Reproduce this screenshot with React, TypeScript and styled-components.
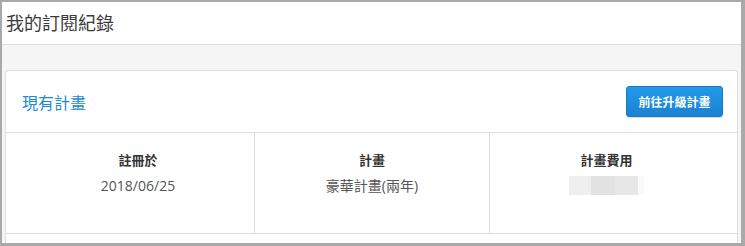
import * as React from 'react';
import styled, { createGlobalStyle } from 'styled-components';

const GlobalStyle = createGlobalStyle`
  html, body {
    margin: 0;
    padding: 0;
    background: #fff;
  }
  * {
    box-sizing: border-box;
  }
`;

type Field = {
  label: string,
  value?: string,
  hidden?: boolean,
}

const fields: Field[] = [
  { label: '註冊於', value: '2018/06/25' },
  { label: '計畫', value: '豪華計畫(兩年)' },
  { label: '計畫費用', hidden: true },
];

const App: React.FC = () => {
  return (
    <React.Fragment>
      <GlobalStyle />
      <Frame>
        <PageHeader>
          <PageTitle>我的訂閱紀錄</PageTitle>
        </PageHeader>
        <PageBody>
          <Card>
            <CardHeader>
              <CardTitle>現有計畫</CardTitle>
              <UpgradeButton>前往升級計畫</UpgradeButton>
            </CardHeader>
            <InfoRow>
              {fields.map((f) => (
                <InfoCell key={f.label}>
                  <InfoLabel>{f.label}</InfoLabel>
                  {f.hidden ? (
                    <InfoValue><Redacted /></InfoValue>
                  ) : (
                    <InfoValue>{f.value}</InfoValue>
                  )}
                </InfoCell>
              ))}
            </InfoRow>
          </Card>
        </PageBody>
      </Frame>
    </React.Fragment>
  );
};

export default App;

const Frame = styled.div`
  width: 745px;
  height: 246px;
  border-style: solid;
  border-color: #a9a9a9;
  border-width: 2px 4px 3px 2px;
  display: flex;
  flex-direction: column;
  overflow: hidden;
  font-family: "Open Sans", "Noto Sans CJK TC", sans-serif;
  background: #f5f5f5;
`;

const PageHeader = styled.div`
  height: 43px;
  flex: none;
  display: flex;
  align-items: center;
  padding-left: 4px;
  background: #fff;
  border-bottom: 1px solid #dddddd;
`;

const PageTitle = styled.h1`
  margin: 0;
  font-size: 18px;
  font-weight: 400;
  color: #3a3a3a;
  line-height: 1;
`;

const PageBody = styled.div`
  flex: 1;
  padding: 25px 3px 0 3px;
`;

const Card = styled.div`
  background: #fff;
  border: 1px solid #dddddd;
  border-bottom: none;
  border-radius: 4px 4px 0 0;
  height: 100%;
`;

const CardHeader = styled.div`
  height: 62px;
  display: flex;
  align-items: center;
  justify-content: space-between;
  padding: 0 14px 0 16px;
  border-bottom: 1px solid #dddddd;
`;

const CardTitle = styled.h2`
  margin: 0;
  font-size: 16px;
  font-weight: 400;
  color: #1a8ad6;
`;

const UpgradeButton = styled.button`
  width: 97px;
  height: 31px;
  border: 1px solid #1679c4;
  border-radius: 3px;
  background: linear-gradient(#2499ea, #1a82d2);
  color: #fff;
  font-family: inherit;
  font-size: 12px;
  font-weight: 600;
  box-shadow: 0 1px 1px rgba(0, 0, 0, 0.15);
  cursor: pointer;
  padding: 0;
`;

const InfoRow = styled.div`
  display: grid;
  grid-template-columns: 249px 235px 1fr;
  height: 101px;
  border-bottom: 1px solid #dddddd;
`;

const InfoCell = styled.div`
  display: flex;
  flex-direction: column;
  align-items: center;
  padding-top: 15px;
  border-right: 1px solid #dddddd;
  &:first-child {
    padding-left: 16px;
  }
  &:last-child {
    border-right: none;
    padding-right: 14px;
  }
`;

const InfoLabel = styled.div`
  font-size: 13px;
  font-weight: 700;
  color: #333;
  line-height: 25px;
`;

const InfoValue = styled.div`
  font-size: 14px;
  color: #555;
  line-height: 25px;
  display: flex;
  align-items: center;
  height: 25px;
`;

const Redacted = styled.span`
  display: inline-block;
  width: 75px;
  height: 19px;
  background: linear-gradient(90deg, #efefef 0 30%, #e2e2e2 30% 61%, #e7e7e7 61% 92%, #fafafa 92%);
`;
